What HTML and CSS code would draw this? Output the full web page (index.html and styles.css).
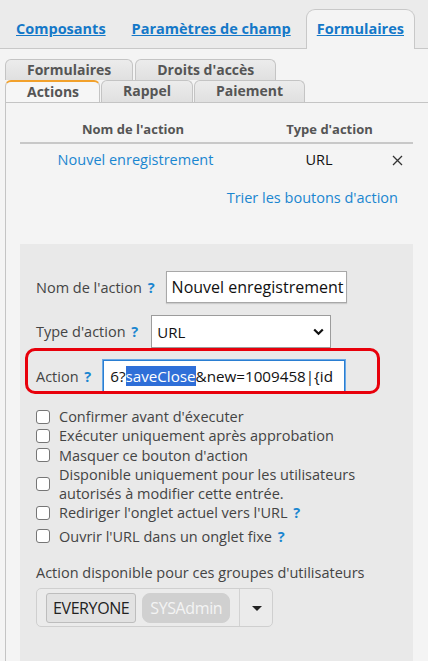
FILE: index.html
```html
<!DOCTYPE html>
<html lang="fr">
<head>
<meta charset="utf-8">
<title>Actions</title>
<link rel="stylesheet" href="styles.css">
</head>
<body>
<div class="topbar">
  <a class="toptab" href="#">Composants</a>
  <a class="toptab" href="#">Paramètres de champ</a>
  <a class="toptab active" href="#">Formulaires</a>
</div>
<div class="subtabs">
  <div class="tabrow">
    <span class="subtab">Formulaires</span>
    <span class="subtab">Droits d'accès</span>
  </div>
  <div class="tabrow second">
    <span class="subtab active">Actions</span>
    <span class="subtab">Rappel</span>
    <span class="subtab">Paiement</span>
  </div>
</div>
<div class="panel">
  <div class="actions-table">
    <div class="th">Nom de l'action</div>
    <div class="th span2">Type d'action</div>
    <div class="td name-cell"><a class="link" href="#">Nouvel enregistrement</a></div>
    <div class="td type">URL</div>
    <div class="td del"><svg width="11" height="11" viewBox="0 0 11 11"><path d="M1 1 L10 10 M10 1 L1 10" stroke="#333" stroke-width="1.3" fill="none"/></svg></div>
  </div>
  <div class="sort"><a class="link" href="#">Trier les boutons d'action</a></div>

  <div class="form">
    <div class="frow r1">
      <span class="label">Nom de l'action <span class="help">?</span></span>
      <div class="input name">Nouvel enregistrement</div>
    </div>
    <div class="frow r2">
      <span class="label">Type d'action <span class="help">?</span></span>
      <div class="input select">URL
        <svg class="chev" width="11" height="8" viewBox="0 0 11 8"><path d="M1.2 1.5 L5.5 5.8 L9.8 1.5" fill="none" stroke="#111" stroke-width="2.2"/></svg>
      </div>
    </div>
    <div class="frow r3">
      <span class="label">Action <span class="help">?</span></span>
      <div class="input action">6?<span class="sel">saveClose</span>&amp;new=1009458|{id</div>
      <div class="highlight"></div>
    </div>

    <div class="checks">
      <div class="chk"><span class="box"></span><span>Confirmer avant d'éxecuter</span></div>
      <div class="chk"><span class="box"></span><span>Exécuter uniquement après approbation</span></div>
      <div class="chk"><span class="box"></span><span>Masquer ce bouton d'action</span></div>
      <div class="chk"><span class="box"></span><span>Disponible uniquement pour les utilisateurs autorisés à modifier cette entrée.</span></div>
      <div class="chk"><span class="box"></span><span>Rediriger l'onglet actuel vers l'URL <span class="help">?</span></span></div>
      <div class="chk"><span class="box"></span><span>Ouvrir l'URL dans un onglet fixe <span class="help">?</span></span></div>
    </div>

    <div class="groups-label">Action disponible pour ces groupes d'utilisateurs</div>
    <div class="multi">
      <div class="chips">
        <span class="chip">EVERYONE</span>
        <span class="chip ghost">SYSAdmin</span>
      </div>
      <div class="caret-box"><span class="caret"></span></div>
    </div>
  </div>
</div>
</body>
</html>
```
FILE: styles.css
```css
* { box-sizing: border-box; }
html, body { margin: 0; padding: 0; }
body {
  width: 428px;
  height: 661px;
  overflow: hidden;
  background: #f4f4f4;
  font-family: "Open Sans", "DejaVu Sans", sans-serif;
  color: #444;
}
a { text-decoration: none; }

.topbar {
  height: 49px;
  background: #ebebeb;
  border-bottom: 1px solid #c8c8c8;
  display: flex;
  align-items: flex-end;
  padding-left: 5px;
  gap: 4px;
}
.toptab {
  font-size: 14.5px;
  font-weight: 700;
  color: #1478c8;
  text-decoration: underline;
  padding: 0 10px;
  height: 40px;
  line-height: 37px;
  margin-bottom: -1px;
  border: 1px solid transparent;
  border-bottom: none;
}
.toptab.active {
  background: #f4f4f4;
  border-color: #c8c8c8;
  border-radius: 9px 9px 0 0;
}

.subtabs {
  padding: 10px 0 0 5px;
}
.tabrow {
  display: flex;
  gap: 2px;
}
.tabrow.second { gap: 1px; }
.subtab {
  display: block;
  font-size: 14px;
  font-weight: 700;
  color: #555;
  padding: 0 21px;
  height: 21px;
  line-height: 20px;
  border: 1px solid #c4c4c4;
  border-bottom: none;
  border-radius: 6px 6px 0 0;
  background: linear-gradient(#ececec, #e0e0e0);
}
.tabrow.second .subtab { height: 22px; line-height: 20px; }
.subtab.active {
  background: #f6f6f6;
  border-top: 2px solid #f2a12c;
  line-height: 18px;
  padding: 0 20px 0 21px;
}

.panel {
  margin-left: 5px;
  border-left: 1px solid #c4c4c4;
  border-top: 1px solid #c4c4c4;
  padding: 0 15px 0 14px;
  height: 559px;
}

.actions-table {
  display: grid;
  grid-template-columns: 226px 146px 1fr;
  margin-top: 12px;
}
.th {
  font-size: 13px;
  font-weight: 700;
  color: #555;
  text-align: center;
  height: 29px;
  line-height: 28px;
  border-bottom: 2px solid #c8c8c8;
}
.th.span2 { grid-column: span 2; }
.td {
  font-size: 14.5px;
  height: 32px;
  line-height: 31px;
  text-align: center;
  color: #222;
}
.td.name-cell { padding-left: 5px; }
.td.type { color: #111; }
.td.del {
  display: flex;
  align-items: center;
  padding-left: 0;
}
.link { color: #1a86d0; }
.sort {
  text-align: right;
  padding-right: 15px;
  font-size: 14.5px;
  margin-top: 12px;
  line-height: 19px;
}

.form {
  margin-top: 37px;
  background: #e9e9e9;
  padding: 27px 0 0 16px;
  height: 417px;
}
.frow {
  display: flex;
  align-items: center;
  position: relative;
}
.label {
  font-size: 14.5px;
  color: #444;
  margin-right: 11px;
}
.help {
  color: #1a86d0;
  font-weight: 700;
  margin-left: 2px;
}
.input {
  background: #fff;
  border: 1px solid #a8a8a8;
  font-size: 16px;
  color: #111;
  height: 32px;
  line-height: 30px;
  padding: 0 5px;
  white-space: nowrap;
  overflow: hidden;
}
.input.name { width: 181px; box-shadow: 0 1px 1px rgba(0,0,0,0.12); }
.r2 { margin-top: 12px; }
.r2 .label { margin-right: 13px; }
.input.select {
  width: 180px;
  height: 33px;
  font-size: 15px;
  display: flex;
  align-items: center;
  justify-content: space-between;
  padding: 0 6px 0 5px;
  border-color: #9c9c9c;
}
.r3 { margin-top: 12px; }
.r3 .label { margin-right: 12px; }
.input.action {
  width: 242px;
  border: 1px solid #2a7ed2;
  padding: 0 0 0 6px;
  outline: 1px solid #6aa9e6;
  font-size: 15.2px;
}
.sel { background: #2f6fd8; color: #fff; }
.highlight {
  position: absolute;
  left: -11px;
  top: -12px;
  width: 355px;
  height: 46px;
  border: 3px solid #e8000b;
  border-radius: 10px;
  pointer-events: none;
}

.checks {
  margin-top: 15px;
  font-size: 14.5px;
  line-height: 19.3px;
  color: #444;
}
.chk {
  display: flex;
  align-items: center;
  gap: 9px;
}
.chk:nth-child(6) { margin-top: 4px; }
.box {
  flex: none;
  width: 14px;
  height: 14px;
  border: 1.5px solid #767676;
  border-radius: 3px;
  background: #fff;
}

.groups-label {
  margin-top: 17px;
  font-size: 14.5px;
  color: #444;
  line-height: 20px;
}
.multi {
  margin-top: 5px;
  width: 237px;
  height: 39px;
  border: 1px solid #cfcfcf;
  border-radius: 5px;
  display: flex;
  background: #ebebeb;
}
.chips {
  flex: 1;
  display: flex;
  align-items: center;
  gap: 6px;
  padding-left: 9px;
  border-right: 1px solid #d2d2d2;
}
.chip {
  height: 30px;
  line-height: 28px;
  font-size: 16px;
  padding: 0 6px;
  border: 1px solid #bdbdbd;
  border-radius: 3px;
  background: #e2e2e2;
  color: #222;
  letter-spacing: -0.4px;
}
.chip.ghost {
  background: #d0d0d0;
  border-color: #d0d0d0;
  color: #f4f4f4;
  border-radius: 8px;
  padding: 0 7px;
}
.caret-box {
  width: 32px;
  display: flex;
  align-items: center;
  justify-content: center;
}
.caret {
  width: 0; height: 0;
  border-left: 5px solid transparent;
  border-right: 5px solid transparent;
  border-top: 5px solid #222;
  margin-left: 1px;
  margin-top: 2px;
}
```
